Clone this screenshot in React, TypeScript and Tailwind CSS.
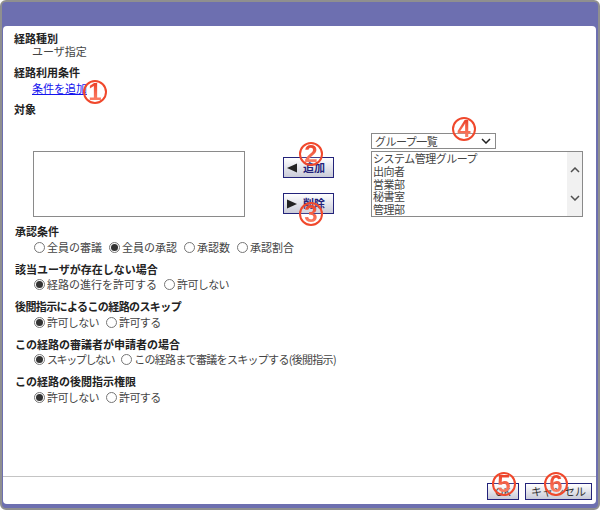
const font = "[font-family:'Noto_Sans_CJK_JP','Liberation_Sans',sans-serif]";

function Mark({ n, className }: { n: string; className: string }) {
  return (
    <span
      className={
        "absolute flex h-[24px] w-[24px] items-center justify-center rounded-full border-2 border-[#f0482c] bg-white/15 " +
        className
      }
    >
      <span className="bg-gradient-to-b from-[#e8321a] to-[#ff8a70] bg-clip-text text-[24px] leading-none font-bold text-transparent [font-family:'Liberation_Sans',sans-serif]">
        {n}
      </span>
    </span>
  );
}

function Radio({ label, checked, tight }: { label: string; checked?: boolean; tight?: string }) {
  return (
    <span className="mr-[7px] flex items-center">
      <span className="mr-[2px] flex h-[11px] w-[11px] items-center justify-center rounded-full border border-[#767676] bg-white">
        {checked && <span className="h-[7px] w-[7px] rounded-full bg-[#333]" />}
      </span>
      <span className={tight}>{label}</span>
    </span>
  );
}

function Section({ title, tight, children }: { title: string; tight?: string; children: React.ReactNode }) {
  return (
    <div className="h-[37.5px]">
      <div className={"h-[15px] pl-px leading-[15px] font-bold text-[#222] " + (tight ?? "")}>{title}</div>
      <div className="ml-[20px] flex h-[16px] items-center text-[#444]">{children}</div>
    </div>
  );
}

function ArrowButton({ dir, label }: { dir: "left" | "right"; label: string }) {
  return (
    <button className="flex h-[21px] w-[51px] items-center border border-[#23237a] bg-gradient-to-b from-white to-[#c9cbd8] pl-[2px] text-[11px] font-bold text-[#23237a]">
      <svg width="12" height="10" viewBox="0 0 12 10" className="mr-[5px] shrink-0">
        {dir === "left" ? <path d="M1 5l10-4.500v9z" fill="#222" /> : <path d="M11 5L1 .5v9z" fill="#222" />}
      </svg>
      {label}
    </button>
  );
}

export default function App() {
  const groups = ["システム管理グループ", "出向者", "営業部", "秘書室", "管理部"];

  return (
    <div className={"h-[510px] w-[600px] overflow-hidden rounded-[6px] border-2 border-[#8f8f8f] bg-[#6d6fb0] pl-px text-[11px] " + font}>
      <div className="h-[24px]" />
      <div className="flex h-[478px] w-[593px] flex-col rounded-t-[4px] rounded-b-[4px] bg-white">
        <div className="relative flex-1 pt-[6px] pl-[11px]">
          <div className="h-[12px] leading-[12px] font-bold text-[#222]">経路種別</div>
          <div className="mt-[1px] ml-[18px] h-[12px] leading-[12px] text-[#444]">ユーザ指定</div>

          <div className="mt-[9px] h-[12px] leading-[12px] font-bold text-[#222]">経路利用条件</div>
          <div className="mt-[3px] ml-[18px] h-[14px] leading-[14px] text-[#1414ee] underline">条件を追加</div>
          <Mark n="1" className="top-[54px] left-[80px]" />

          <div className="mt-[7px] h-[14px] leading-[14px] font-bold text-[#222]">対象</div>

          <div className="mt-[17px] flex h-[84px] items-end">
            <div className="ml-[19px] h-[66px] w-[212px] border border-[#8a8a8a] bg-white" />
            <div className="mb-[3px] ml-[38px] flex w-[51px] flex-col gap-[15px]">
              <ArrowButton dir="left" label="追加" />
              <ArrowButton dir="right" label="削除" />
            </div>
            <div className="ml-[37px] flex w-[212px] flex-col">
              <div className="flex h-[16px] w-[125px] items-center border border-[#8a8a8a] pl-[3px] text-[#444]">
                <span className="flex-1 tracking-[-0.5px]">グループ一覧</span>
                <svg width="10" height="6" viewBox="0 0 10 6" className="mr-[4px]">
                  <path d="M1 1l4 4 4-4" fill="none" stroke="#222" strokeWidth="1.500" />
                </svg>
              </div>
              <div className="mt-[2px] flex h-[66px] border border-[#8a8a8a] bg-white">
                <div className="flex-1 pl-px tracking-[-0.5px] text-[#444]">
                  {groups.map((g) => (
                    <div key={g} className="h-[12.800px] leading-[12.800px]">{g}</div>
                  ))}
                </div>
                <div className="flex w-[15px] flex-col items-center justify-between bg-[#f1f1f1] py-[15px]">
                  <svg width="10" height="6" viewBox="0 0 10 6"><path d="M1 5l4-4 4 4" fill="none" stroke="#505050" strokeWidth="1.500" /></svg>
                  <svg width="10" height="6" viewBox="0 0 10 6"><path d="M1 1l4 4 4-4" fill="none" stroke="#505050" strokeWidth="1.500" /></svg>
                </div>
              </div>
            </div>
          </div>

          <Mark n="2" className="top-[116px] left-[296px]" />
          <Mark n="3" className="top-[176px] left-[296px]" />
          <Mark n="4" className="top-[91px] left-[449px]" />

          <div className="mt-[7px]">
            <Section title="承認条件">
              <Radio label="全員の審議" />
              <Radio label="全員の承認" checked />
              <Radio label="承認数" />
              <Radio label="承認割合" />
            </Section>
            <Section title="該当ユーザが存在しない場合">
              <Radio label="経路の進行を許可する" checked />
              <Radio label="許可しない" tight="tracking-[-0.6px]" />
            </Section>
            <Section title="後閲指示によるこの経路のスキップ" tight="tracking-[-0.6px]">
              <Radio label="許可しない" checked tight="tracking-[-0.6px]" />
              <Radio label="許可する" tight="tracking-[-0.6px]" />
            </Section>
            <Section title="この経路の審議者が申請者の場合">
              <Radio label="スキップしない" checked tight="tracking-[-1.4px]" />
              <Radio label="この経路まで審議をスキップする(後閲指示)" tight="tracking-[-0.7px]" />
            </Section>
            <Section title="この経路の後閲指示権限">
              <Radio label="許可しない" checked tight="tracking-[-0.6px]" />
              <Radio label="許可する" tight="tracking-[-0.6px]" />
            </Section>
          </div>
        </div>

        <div className="relative flex h-[28px] items-start justify-end gap-[6px] border-t border-[#c4c4c4] pt-[6px] pr-[4px]">
          <button className="h-[17px] w-[32px] border border-[#23237a] bg-gradient-to-b from-white to-[#c9cbd8] text-[11px] leading-[15px] text-[#333]">OK</button>
          <button className="h-[17px] w-[67px] border border-[#23237a] bg-gradient-to-b from-white to-[#c9cbd8] text-[11px] leading-[15px] text-[#333]">キャンセル</button>
          <Mark n="5" className="top-[-5px] left-[489px]" />
          <Mark n="6" className="top-[-5px] left-[541px]" />
        </div>
      </div>
    </div>
  );
}
